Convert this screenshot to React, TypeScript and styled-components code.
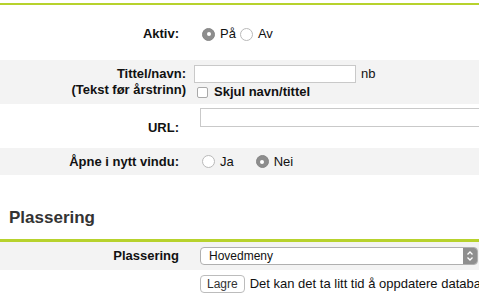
import React from 'react';
import styled, { createGlobalStyle } from 'styled-components';

const GlobalStyle = createGlobalStyle`
    html, body {
        margin: 0;
        padding: 0;
        background: #ffffff;
        font-family: "Liberation Sans", Arial, Helvetica, sans-serif;
        color: #111;
        overflow: hidden;
    }
`;

const Page = styled.div`
    width: 479px;
    height: 297px;
    padding-top: 3px;
    box-sizing: border-box;
    overflow: hidden;
`;

const Section = styled.div<{ $thick?: boolean }>`
    border-top: ${(p) => (p.$thick ? '3px' : '2px')} solid #b7d22d;
`;

const Row = styled.div<{ $gray?: boolean; $pad: string; $height?: number }>`
    display: grid;
    grid-template-columns: 194px 1fr;
    align-items: center;
    box-sizing: border-box;
    height: ${(p) => (p.$height ? `${p.$height}px` : 'auto')};
    background: ${(p) => (p.$gray ? '#f3f3f3' : '#ffffff')};
    padding: ${(p) => p.$pad};
`;

const Label = styled.div<{ $right?: number }>`
    font-size: 13px;
    font-weight: bold;
    text-align: right;
    padding-right: ${(p) => (p.$right !== undefined ? p.$right : 15)}px;
    line-height: 16px;
    white-space: nowrap;
`;

const Value = styled.div<{ $left?: number; $top?: boolean }>`
    display: flex;
    flex-direction: column;
    gap: 2px;
    align-self: ${(p) => (p.$top ? 'start' : 'center')};
    padding-left: ${(p) => p.$left || 0}px;
    min-width: 0;
    white-space: nowrap;
`;

const Line = styled.div<{ $gap?: number; $indent?: number }>`
    display: flex;
    align-items: center;
    gap: ${(p) => p.$gap || 4}px;
    padding-left: ${(p) => p.$indent || 0}px;
    font-size: 13px;
    line-height: 14px;
`;

const Radio = styled.span<{ $on?: boolean }>`
    display: inline-block;
    width: 13px;
    height: 13px;
    border-radius: 50%;
    box-sizing: border-box;
    position: relative;
    background: ${(p) => (p.$on ? '#8d8d8d' : '#ffffff')};
    border: 1px solid ${(p) => (p.$on ? '#868686' : '#b9b9b9')};
    &::after {
        content: '';
        display: ${(p) => (p.$on ? 'block' : 'none')};
        position: absolute;
        left: 50%;
        top: 50%;
        width: 4px;
        height: 4px;
        margin: -2px 0 0 -2px;
        border-radius: 50%;
        background: #ffffff;
    }
`;

const RadioGroup = styled.div<{ $gap: number }>`
    display: flex;
    align-items: center;
    gap: ${(p) => p.$gap}px;
`;

const Option = styled.label`
    display: flex;
    align-items: center;
    gap: 5px;
    font-size: 13px;
    line-height: 16px;
    color: #111;
`;

const TextInput = styled.div<{ $width?: number }>`
    width: ${(p) => (p.$width ? `${p.$width}px` : 'calc(100% + 10px)')};
    height: ${(p) => (p.$width ? 18 : 19)}px;
    box-sizing: border-box;
    border: 1px solid #c9c9c9;
    background: #fff;
`;

const Checkbox = styled.span`
    display: inline-block;
    width: 11px;
    height: 11px;
    box-sizing: border-box;
    border: 1px solid #a9a9a9;
    border-radius: 2px;
    background: #fff;
`;

const CheckText = styled.span`
    font-size: 13px;
    font-weight: bold;
`;

const Heading = styled.h2`
    margin: 0;
    padding: 33px 0 11px 9px;
    font-size: 17px;
    font-weight: bold;
    color: #333;
    line-height: 20px;
`;

const Select = styled.div`
    display: flex;
    align-items: center;
    justify-content: space-between;
    width: 278px;
    height: 18px;
    box-sizing: border-box;
    border: 1px solid #b0b0b0;
    border-radius: 4px;
    background: #fff;
    overflow: hidden;
    font-size: 12px;
    color: #111;
    padding-left: 8px;
`;

const SelectArrow = styled.span`
    display: flex;
    align-items: center;
    justify-content: center;
    width: 14px;
    height: 100%;
    background: #8f8f8f;
`;

const Button = styled.button`
    height: 18px;
    padding: 0 6px;
    border: 1px solid #bcbcbc;
    border-radius: 4px;
    background: #fff;
    font-family: "Liberation Sans", Arial, sans-serif;
    font-size: 12px;
    color: #333;
    line-height: 16px;
`;

const Note = styled.span`
    font-size: 13px;
    color: #111;
`;

const App = () => {
    return (
        <>
            <GlobalStyle />
            <Page>
                <Section>
                    <Row $height={55} $pad="3px 0 0">
                        <Label>Aktiv:</Label>
                        <Value $left={8}>
                            <RadioGroup $gap={4}>
                                <Option><Radio $on />På</Option>
                                <Option><Radio />Av</Option>
                            </RadioGroup>
                        </Value>
                    </Row>
                    <Row $gray $height={44} $pad="5px 0 5px">
                        <Label $right={8}>Tittel/navn:<br />(Tekst før årstrinn)</Label>
                        <Value>
                            <Line $gap={5}>
                                <TextInput $width={162} />
                                nb
                            </Line>
                            <Line $gap={6} $indent={3}>
                                <Checkbox />
                                <CheckText>Skjul navn/tittel</CheckText>
                            </Line>
                        </Value>
                    </Row>
                    <Row $height={44} $pad="4px 0 0">
                        <Label>URL:</Label>
                        <Value $left={6} $top>
                            <TextInput />
                        </Value>
                    </Row>
                    <Row $gray $height={27} $pad="0">
                        <Label>Åpne i nytt vindu:</Label>
                        <Value $left={8}>
                            <RadioGroup $gap={22}>
                                <Option><Radio />Ja</Option>
                                <Option><Radio $on />Nei</Option>
                            </RadioGroup>
                        </Value>
                    </Row>
                </Section>
                <Heading>Plassering</Heading>
                <Section $thick>
                    <Row $gray $height={28} $pad="0">
                        <Label>Plassering</Label>
                        <Value $left={6}>
                            <Select>
                                Hovedmeny
                                <SelectArrow>
                                    <svg width="8" height="12" viewBox="0 0 8 12">
                                        <path d="M1.5 4.5 L4 2 L6.5 4.5 M1.5 7.5 L4 10 L6.5 7.5" fill="none" stroke="#fff" strokeWidth="1.3" />
                                    </svg>
                                </SelectArrow>
                            </Select>
                        </Value>
                    </Row>
                    <Row $height={28} $pad="0">
                        <Label />
                        <Value $left={6}>
                            <Line $gap={5}>
                                <Button>Lagre</Button>
                                <Note>Det kan det ta litt tid å oppdatere databasen</Note>
                            </Line>
                        </Value>
                    </Row>
                </Section>
            </Page>
        </>
    );
};

export default App;
